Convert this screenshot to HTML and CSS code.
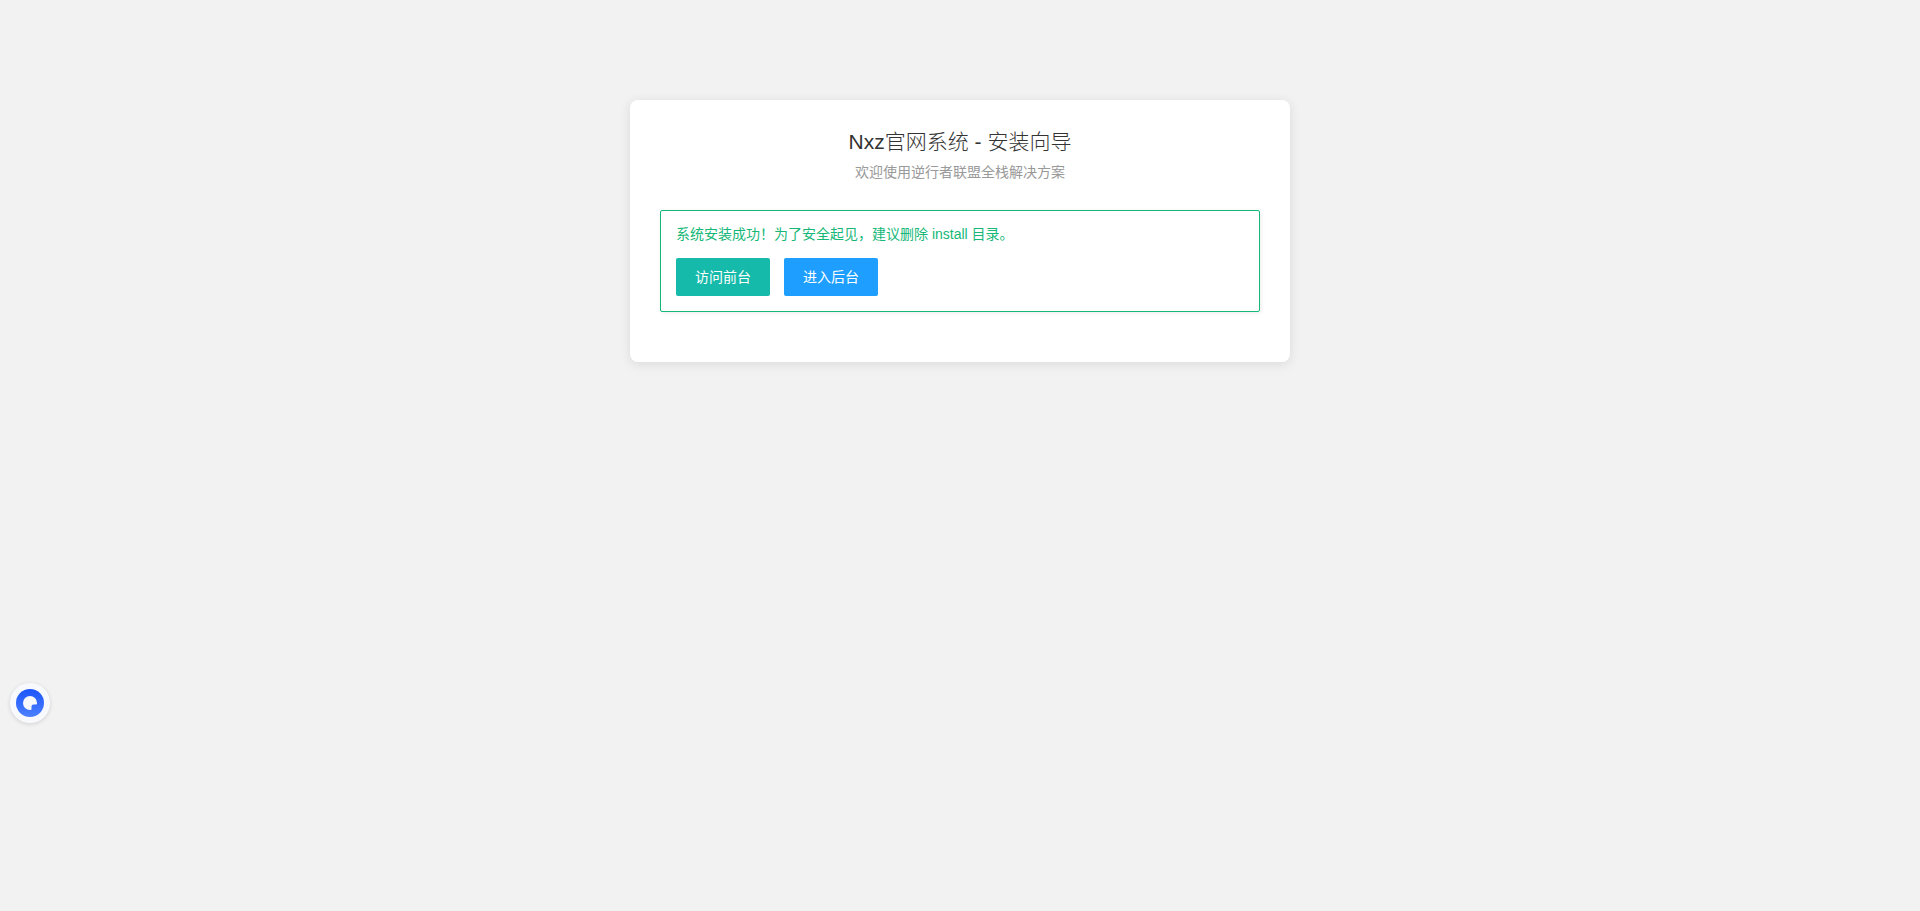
FILE: index.html
```html
<!DOCTYPE html>
<html lang="zh-CN">
<head>
<meta charset="utf-8">
<title>Nxz官网系统 - 安装向导</title>
<link rel="stylesheet" href="styles.css">
</head>
<body>
<main class="install">
  <header class="install-header">
    <h1 class="install-title">Nxz官网系统 - 安装向导</h1>
    <p class="install-subtitle">欢迎使用逆行者联盟全栈解决方案</p>
  </header>
  <section class="notice">
    <p class="notice-text">系统安装成功！为了安全起见，建议删除 install 目录。</p>
    <div class="actions">
      <a class="btn btn-teal" href="#front">访问前台</a>
      <a class="btn btn-blue" href="#admin">进入后台</a>
    </div>
  </section>
</main>
<button class="assistant" type="button" aria-label="助手">
  <svg class="assistant-icon" viewBox="0 0 28 28" aria-hidden="true">
    <defs>
      <linearGradient id="disc" x1="0" y1="0" x2="0" y2="1">
        <stop offset="0" stop-color="#1c55fb"/>
        <stop offset="1" stop-color="#4c80ff"/>
      </linearGradient>
    </defs>
    <circle cx="14" cy="14" r="14" fill="url(#disc)"/>
    <path fill="#f8f9fc" d="M14 7a7 7 0 0 1 7 7c0 1-.4 1.500-1.300 1.500h-2.200a2 2 0 0 0-2 2v2.200c0 .9-.5 1.300-1.500 1.300a7 7 0 0 1 0-14z"/>
  </svg>
</button>
</body>
</html>
```
FILE: styles.css
```css
* {
  box-sizing: border-box;
}

body {
  margin: 0;
  padding: 100px 20px 40px;
  background: #f2f2f2;
  color: #333;
  font-family: "Liberation Sans", "Noto Sans CJK SC", sans-serif;
  font-size: 14px;
  line-height: 24px;
}

.install {
  max-width: 660px;
  margin: 0 auto;
  padding: 30px 30px 50px;
  background: #fff;
  border-radius: 8px;
  box-shadow: 0 2px 12px rgba(0, 0, 0, 0.1);
}

.install-header {
  margin-bottom: 26px;
  text-align: center;
}

.install-title {
  margin: 0 0 6px;
  font-size: 21px;
  font-weight: 300;
}

.install-subtitle {
  margin: 0;
  color: #999;
}

.notice {
  padding: 15px;
  border: 1px solid #16b777;
  border-radius: 2px;
  box-shadow: 1px 1px 4px rgba(0, 0, 0, 0.08);
  color: #16b777;
}

.notice-text {
  margin: 0 0 16px;
  line-height: 16px;
}

.actions {
  display: flex;
  flex-wrap: wrap;
  gap: 14px;
}

.btn {
  padding: 0 19px;
  border-radius: 2px;
  color: #fff;
  line-height: 38px;
  text-decoration: none;
}

.btn-teal {
  background: #16baaa;
}

.btn-blue {
  background: #1e9fff;
}

.assistant {
  position: fixed;
  left: 10px;
  bottom: 188px;
  display: flex;
  align-items: center;
  justify-content: center;
  width: 40px;
  height: 40px;
  padding: 0;
  border: 0;
  border-radius: 50%;
  background: #f8f9fc;
  box-shadow: 0 1px 4px rgba(0, 0, 0, 0.14);
  cursor: pointer;
}

.assistant-icon {
  width: 28px;
  height: 28px;
}
```
